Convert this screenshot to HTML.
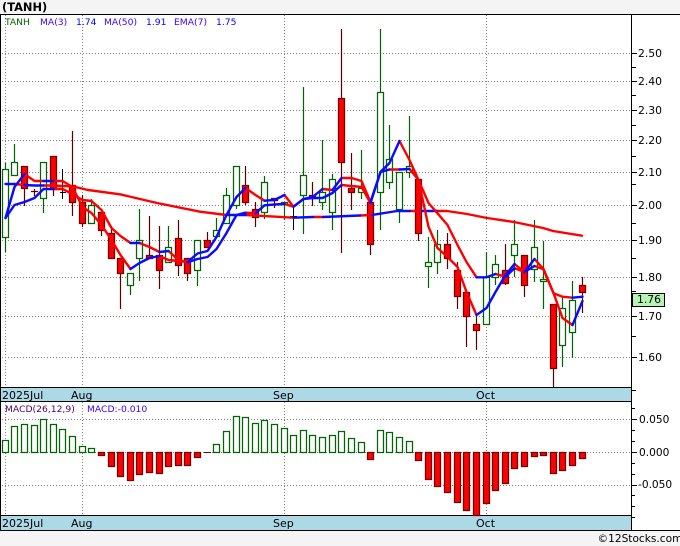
<!DOCTYPE html>
<html><head><meta charset="utf-8"><title>TANH</title>
<style>
html,body{margin:0;padding:0;background:#f4f4f4;width:680px;height:546px;overflow:hidden}
svg{display:block}
text{font-family:"DejaVu Sans","Liberation Sans",sans-serif;fill:#000}
.a{font-size:10.8px}.m{font-size:10.6px}.d{font-size:11px}.l{font-size:9.2px}
</style></head><body>
<svg width="680" height="546" viewBox="0 0 680 546" xmlns="http://www.w3.org/2000/svg">
<rect x="0" y="0" width="680" height="546" fill="#f4f4f4"/>
<rect x="0" y="15" width="680" height="515" fill="#fff"/>
<rect x="1" y="388" width="630" height="13" fill="#add8e6"/>
<rect x="1" y="516" width="630" height="14" fill="#add8e6"/>
<g fill="none" stroke="#808080" stroke-dasharray="1 2">
<path d="M2 53.5H631M2 81.5H631M2 110.5H631M2 140.5H631M2 172.5H631M2 205.5H631M2 240.5H631M2 277.5H631M2 316.5H631M2 357.5H631M2 419.5H631M2 452.5H631M2 485.5H631"/>
<path d="M5.5 15V387M82.5 15V387M284.5 15V387M486.5 15V387M5.5 402V515M82.5 402V515M284.5 402V515M486.5 402V515"/>
</g>
<path d="M0 14.5H680M0.5 14V531M0 387.5H631M0 401.5H631M0 515.5H631M0 530.5H680M631.5 14V531" fill="none" stroke="#000"/>
<path d="M632 53.5h5M632 81.5h5M632 110.5h5M632 140.5h5M632 172.5h5M632 205.5h5M632 240.5h5M632 277.5h5M632 316.5h5M632 357.5h5M632 67.5h4M632 95.5h4M632 125.5h4M632 156.5h4M632 184.5h4M632 223.5h4M632 258.5h4M632 291.5h4M632 336.5h4M632 390.5h4M632 408.5h3M632 419.5h5M632 430.5h3M632 441.5h3M632 452.5h5M632 463.5h3M632 474.5h3M632 485.5h5M632 495.5h3M632 506.5h3M632 517.5h3" fill="none" stroke="#000"/>

<!-- candle wicks -->
<path fill="none" stroke="#006400" stroke-width="1.2" d="M5.5 163V252M14.5 144V175M43.5 162V213M91.5 199V223M130.5 273V295M139.5 209V281M168.5 226V262M197.5 240V286M216.5 218V236M226.5 188V223M236.5 166V209M264.5 176V219M284.5 202V220M303.5 87V234M322.5 140V210M332.5 174V230M361.5 150V199M380.5 29V230M389.5 125V189M399.5 172V223M409.5 116V178M428.5 237V288M437.5 230V274M486.5 252V324M495.5 255V285M514.5 220V277M534.5 220V282M543.5 241V309M562.5 297V367M572.5 281V358"/>
<path fill="none" stroke="#5a0000" stroke-width="1.2" d="M24.5 166V206M53.5 156V196M72.5 131V216M82.5 195V227M101.5 212V236M111.5 226V258M120.5 258V309M149.5 216V258M159.5 226V289M178.5 220V276M187.5 258V281M207.5 232V247M245.5 166V205M255.5 202V227M274.5 198V208M312.5 182V206M341.5 29V253M351.5 153V210M370.5 202V255M418.5 179V241M447.5 233V269M457.5 262V309M466.5 292V347M476.5 313V350M505.5 244V285M524.5 255V297M553.5 304V387M582.5 277V313"/>
<path fill="none" stroke="#5a0000" stroke-width="1.2" d="M34.5 189V196M31 191.5h7"/>
<path fill="none" stroke="#000" d="M62.5 169V199M60 192.5h6M293.5 208V230M290 216.5h7"/>
<!-- green bodies -->
<path fill="#fff" stroke="#006400" stroke-width="1.25" d="M2.5 169.5h6v68h-6zM11.5 162.5h6v13h-6zM40.5 162.5h6v36h-6zM88.5 205.5h6v18h-6zM127.5 273.5h6v12h-6zM136.5 240.5h6v18h-6zM165.5 247.5h6v15h-6zM194.5 240.5h6v30h-6zM213.5 230.5h6v6h-6zM223.5 195.5h6v28h-6zM233.5 166.5h6v39h-6zM261.5 182.5h6v30h-6zM281.5 202.5h6v2h-6zM300.5 175.5h6v20h-6zM319.5 192.5h6v10h-6zM329.5 179.5h6v33h-6zM358.5 188.5h6v4h-6zM377.5 92.5h6v100h-6zM386.5 159.5h6v23h-6zM396.5 172.5h6v37h-6zM406.5 166.5h6v6h-6zM425.5 262.5h6v4h-6zM434.5 244.5h6v18h-6zM483.5 277.5h6v47h-6zM492.5 264.5h6v13h-6zM511.5 244.5h6v11h-6zM531.5 247.5h6v22h-6zM540.5 279.5h6v2h-6zM559.5 308.5h6v37h-6zM569.5 300.5h6v32h-6z"/>
<!-- red bodies -->
<path fill="#f00" stroke="#7a0000" stroke-width="1.25" d="M21.5 166.5h6v22h-6zM50.5 156.5h6v33h-6zM69.5 185.5h6v17h-6zM79.5 202.5h6v21h-6zM98.5 212.5h6v18h-6zM108.5 233.5h6v25h-6zM117.5 258.5h6v15h-6zM146.5 255.5h6v3h-6zM156.5 255.5h6v15h-6zM175.5 238.5h6v27h-6zM184.5 258.5h6v15h-6zM204.5 240.5h6v7h-6zM242.5 185.5h6v17h-6zM252.5 209.5h6v8h-6zM271.5 198.5h6v2h-6zM309.5 195.5h6v3h-6zM338.5 98.5h6v64h-6zM348.5 188.5h6v4h-6zM367.5 202.5h6v42h-6zM415.5 179.5h6v54h-6zM444.5 244.5h6v14h-6zM454.5 270.5h6v26h-6zM463.5 292.5h6v24h-6zM473.5 324.5h6v6h-6zM502.5 270.5h6v13h-6zM521.5 255.5h6v30h-6zM550.5 304.5h6v64h-6zM579.5 285.5h6v7h-6z"/>

<g fill="none" stroke-width="2.4" stroke-linejoin="round" stroke-linecap="round">
<!-- MA(50) -->
<g stroke="#f00">
<polyline points="14.5,184 24.5,185"/>
<polyline points="43.5,185.5 53.5,185.5 62.5,186 72.5,186.3 88,190 120,194.3 157,203 200,211.7 226.5,215"/>
<polyline points="245.5,215 293.5,217.7"/>
<polyline points="313,217 323,217"/>
<polyline points="360,215.5 372,215"/>
<polyline points="410,211 422,211"/>
<polyline points="437,211 447,211 467,214 487,218 514,222 543,228 553,231 582,235.7"/>
</g>
<g stroke="#0a0aff">
<polyline points="5.5,184 14.5,184"/>
<polyline points="24.5,185 34.5,185.5 43.5,185.5"/>
<polyline points="226.5,215 236.5,215 245.5,215"/>
<polyline points="293.5,217.7 313,217"/>
<polyline points="323,217 360,215.5"/>
<polyline points="372,215 397,211 410,211"/>
<polyline points="422,211 437,211"/>
</g>
<!-- EMA(7) -->
<g stroke="#f00">
<polyline points="53.5,189 62.5,189 72.5,194 82.5,200 91.5,201 101.5,210 111.5,228 120.5,236 130.5,243"/>
<polyline points="139.5,243 149.5,247 159.5,252"/>
<polyline points="168.5,251 178.5,260 187.5,262.3"/>
<polyline points="245.5,212.7 255.5,213.3"/>
<polyline points="284.5,204 293.5,206.7"/>
<polyline points="341.5,185 351.5,186 361.5,187 370.5,203"/>
<polyline points="389.5,169.5 399.5,169.5"/>
<polyline points="409.5,169 418.5,180 428.5,203 437.5,213.3 447.5,225 457.5,245 466.5,262 476.5,277.3"/>
<polyline points="495.5,274 505.5,276.7"/>
<polyline points="514.5,268.3 524.5,272"/>
<polyline points="534.5,266 543.5,269.3 553.5,293.3 562.5,296.7 572.5,297.7"/>
</g>
<g stroke="#0a0aff">
<polyline points="5.5,218 14.5,205 24.5,202 34.5,198 43.5,189 53.5,189"/>
<polyline points="130.5,243 139.5,243"/>
<polyline points="159.5,252 168.5,251"/>
<polyline points="187.5,262.3 197.5,259 207.5,257 216.5,249 226.5,233 236.5,215 245.5,212.7"/>
<polyline points="255.5,213.3 264.5,205.3 274.5,204.5 284.5,204"/>
<polyline points="293.5,206.7 303.5,199 312.5,198 322.5,198 332.5,193 341.5,185"/>
<polyline points="370.5,203 380.5,172 389.5,169.5"/>
<polyline points="399.5,169.5 409.5,169"/>
<polyline points="476.5,277.3 486.5,277.3 495.5,274"/>
<polyline points="505.5,276.7 514.5,268.3"/>
<polyline points="524.5,272 534.5,266"/>
<polyline points="572.5,297.7 582.5,296.7"/>
</g>
<!-- MA(3) -->
<g stroke="#f00">
<polyline points="24.5,174 34.5,181 43.5,181"/>
<polyline points="53.5,181 62.5,181 72.5,187 82.5,207 91.5,213 101.5,225 111.5,240 120.5,255 130.5,269"/>
<polyline points="159.5,256 168.5,260 178.5,261 187.5,262"/>
<polyline points="245.5,188 255.5,195 264.5,200.7"/>
<polyline points="284.5,195 293.5,206.7"/>
<polyline points="322.5,189 332.5,190"/>
<polyline points="341.5,178 351.5,178 361.5,181 370.5,202"/>
<polyline points="399.5,141 409.5,160 418.5,180 428.5,226.7 437.5,248 447.5,257 457.5,267 466.5,292 476.5,315"/>
<polyline points="514.5,264 524.5,272"/>
<polyline points="534.5,259 543.5,269 553.5,293 562.5,318 572.5,325"/>
</g>
<g stroke="#0a0aff">
<polyline points="5.5,218 14.5,187 24.5,174"/>
<polyline points="43.5,181 53.5,181"/>
<polyline points="130.5,269 139.5,263 149.5,258 159.5,256"/>
<polyline points="187.5,262 197.5,253.5 207.5,251 216.5,237 226.5,215 236.5,197 245.5,188"/>
<polyline points="264.5,200.7 274.5,200 284.5,195"/>
<polyline points="293.5,206.7 303.5,199 312.5,197 322.5,189"/>
<polyline points="332.5,190 341.5,178"/>
<polyline points="370.5,202 380.5,172 389.5,163 399.5,141"/>
<polyline points="476.5,315 486.5,308 495.5,292 505.5,275 514.5,264"/>
<polyline points="524.5,272 534.5,259"/>
<polyline points="572.5,325 582.5,301"/>
</g>
</g>

<!-- MACD green -->
<path fill="#fff" stroke="#006400" stroke-width="1.25" d="M2.5 440.5h6V452.5h-6zM11.5 426.5h6V452.5h-6zM21.5 424.5h6V452.5h-6zM31.5 425.5h6V452.5h-6zM40.5 419.5h6V452.5h-6zM50.5 424.5h6V452.5h-6zM59.5 429.5h6V452.5h-6zM69.5 436.5h6V452.5h-6zM79.5 446.5h6V452.5h-6zM88.5 448.5h6V452.5h-6zM213.5 444.5h6V452.5h-6zM223.5 431.5h6V452.5h-6zM233.5 416.5h6V452.5h-6zM242.5 417.5h6V452.5h-6zM252.5 423.5h6V452.5h-6zM261.5 420.5h6V452.5h-6zM271.5 424.5h6V452.5h-6zM281.5 428.5h6V452.5h-6zM290.5 435.5h6V452.5h-6zM300.5 430.5h6V452.5h-6zM309.5 435.5h6V452.5h-6zM319.5 437.5h6V452.5h-6zM329.5 435.5h6V452.5h-6zM338.5 431.5h6V452.5h-6zM348.5 438.5h6V452.5h-6zM358.5 442.5h6V452.5h-6zM377.5 430.5h6V452.5h-6zM386.5 432.5h6V452.5h-6zM396.5 437.5h6V452.5h-6zM406.5 441.5h6V452.5h-6z"/>
<!-- MACD red -->
<path fill="#f00" stroke="#7a0000" stroke-width="1.25" d="M98.5 452.5h6V455.5h-6zM108.5 452.5h6V466.5h-6zM117.5 452.5h6V476.5h-6zM127.5 452.5h6V480.5h-6zM136.5 452.5h6V474.5h-6zM146.5 452.5h6V472.5h-6zM156.5 452.5h6V473.5h-6zM165.5 452.5h6V466.5h-6zM175.5 452.5h6V465.5h-6zM184.5 452.5h6V465.5h-6zM194.5 452.5h6V457.5h-6zM367.5 452.5h6V459.5h-6zM415.5 452.5h6V460.5h-6zM425.5 452.5h6V479.5h-6zM434.5 452.5h6V486.5h-6zM444.5 452.5h6V492.5h-6zM454.5 452.5h6V502.5h-6zM463.5 452.5h6V510.5h-6zM473.5 452.5h6V515.5h-6zM483.5 452.5h6V503.5h-6zM492.5 452.5h6V490.5h-6zM502.5 452.5h6V483.5h-6zM511.5 452.5h6V468.5h-6zM521.5 452.5h6V466.5h-6zM531.5 452.5h6V456.5h-6zM540.5 452.5h6V455.5h-6zM550.5 452.5h6V473.5h-6zM559.5 452.5h6V470.5h-6zM569.5 452.5h6V465.5h-6zM579.5 452.5h6V458.5h-6z"/>
<path d="M204 452.5h7" stroke="#7a0000" fill="none"/>

<!-- price label -->
<rect x="632.5" y="293.5" width="32" height="13" fill="#b4f5b4" stroke="#000"/>

<!-- text -->
<text x="2" y="11" style="font-size:11.4px;font-weight:bold">(TANH)</text>
<text class="l" x="5" y="25" style="fill:#006400">TANH</text>
<text class="l" x="40" y="25" style="fill:#3a00ff">MA(3)</text>
<text class="l" x="76" y="25" style="fill:#0000ff">1.74</text>
<text class="l" x="104" y="25" style="fill:#3a00ff">MA(50)</text>
<text class="l" x="146" y="25" style="fill:#0000ff">1.91</text>
<text class="l" x="174" y="25" style="fill:#3a00ff">EMA(7)</text>
<text class="l" x="216" y="25" style="fill:#0000ff">1.75</text>

<text class="a" x="638" y="57">2.50</text>
<text class="a" x="638" y="85">2.40</text>
<text class="a" x="638" y="114">2.30</text>
<text class="a" x="638" y="144">2.20</text>
<text class="a" x="638" y="176">2.10</text>
<text class="a" x="638" y="209">2.00</text>
<text class="a" x="638" y="244">1.90</text>
<text class="a" x="638" y="281">1.80</text>
<text class="a" x="638" y="320">1.70</text>
<text class="a" x="638" y="361">1.60</text>
<text class="a" x="637" y="303">1.76</text>

<text class="d" x="2" y="399">2025Jul</text>
<text class="d" x="71" y="399">Aug</text>
<text class="d" x="273" y="399">Sep</text>
<text class="d" x="476" y="399">Oct</text>

<text class="l" x="5" y="412" style="fill:#4b0060">MACD(26,12,9)</text>
<text class="l" x="87" y="412" style="fill:#3a00ff">MACD:-0.010</text>

<text class="m" x="639" y="423">0.050</text>
<text class="m" x="639" y="456">0.000</text>
<text class="m" x="638" y="488">-0.050</text>

<text class="d" x="2" y="527">2025Jul</text>
<text class="d" x="71" y="527">Aug</text>
<text class="d" x="273" y="527">Sep</text>
<text class="d" x="476" y="527">Oct</text>

<text x="597.5" y="542" style="font-size:10.6px">©12Stocks.com</text>
</svg>
</body></html>
